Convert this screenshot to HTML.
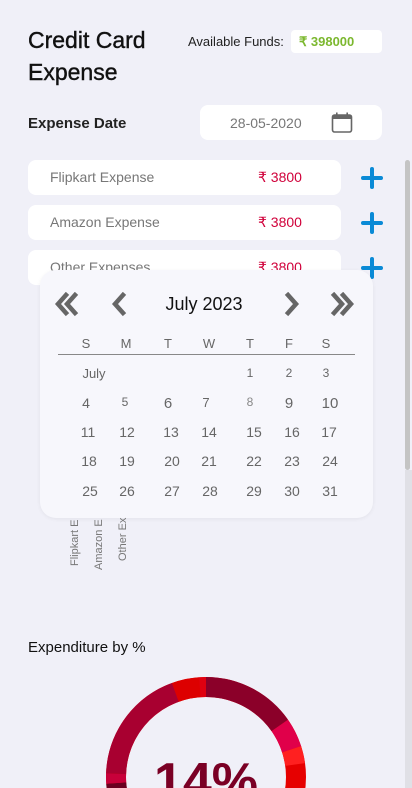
<!DOCTYPE html>
<html style="overflow:hidden;height:788px"><head><meta charset="utf-8"><style>
*{margin:0;padding:0;box-sizing:border-box}
body{width:412px;height:788px;overflow:hidden;background:#f0f0f8;font-family:"Liberation Sans",sans-serif;position:relative;color:#111}
.a{position:absolute}
.box{position:absolute;background:#fff;border-radius:8px}
.lbl{position:absolute;left:22px;top:9px;font-size:14px;color:#777}
.amt{position:absolute;left:230px;top:9px;font-size:14px;color:#d0003a}
.plus{position:absolute;width:22px;height:22px}
.plus:before{content:"";position:absolute;left:0;top:9px;width:22px;height:4px;background:#0a8ad6;border-radius:2px}
.plus:after{content:"";position:absolute;left:9px;top:0;width:4px;height:22px;background:#0a8ad6;border-radius:2px}
.cal{position:absolute;left:40px;top:270px;width:333px;height:248px;background:#f7f7fc;border-radius:16px;box-shadow:0 1px 4px rgba(0,0,0,.06)}
.d{position:absolute;font-size:14px;color:#666;transform:translateX(-50%)}
.v{position:absolute;font-size:11px;color:#777;transform:rotate(-90deg);transform-origin:left top;white-space:nowrap}
</style></head><body>
<div class="a" style="left:28px;top:24px;font-size:23px;line-height:32px;color:#111;-webkit-text-stroke:0.4px #111">Credit Card<br>Expense</div>
<div class="a" style="left:188px;top:34px;font-size:13px;color:#222">Available Funds:</div>
<div class="box" style="left:291px;top:30px;width:91px;height:23px;border-radius:4px"><span class="a" style="left:8px;top:4px;font-size:13px;font-weight:bold;color:#7cb82f">₹ 398000</span></div>
<div class="a" style="left:28px;top:115px;font-size:15px;font-weight:bold;color:#222">Expense Date</div>
<div class="box" style="left:200px;top:105px;width:182px;height:35px"><span class="a" style="left:30px;top:10px;font-size:14px;color:#777">28-05-2020</span>
<svg class="a" style="left:131px;top:7px" width="22" height="22" viewBox="0 0 22 22"><rect x="1.5" y="3" width="19" height="17" rx="2" fill="none" stroke="#666" stroke-width="1.6"/><rect x="1.5" y="3" width="19" height="4" fill="#666"/><rect x="5" y="0.5" width="1.6" height="4" fill="#666"/><rect x="15.4" y="0.5" width="1.6" height="4" fill="#666"/></svg></div>
<div class="box" style="left:28px;top:160px;width:313px;height:35px"><span class="lbl">Flipkart Expense</span><span class="amt">₹ 3800</span></div>
<div class="box" style="left:28px;top:205px;width:313px;height:35px"><span class="lbl">Amazon Expense</span><span class="amt">₹ 3800</span></div>
<div class="box" style="left:28px;top:250px;width:313px;height:35px"><span class="lbl">Other Expenses</span><span class="amt">₹ 3800</span></div>
<div class="plus" style="left:361px;top:167px"></div>
<div class="plus" style="left:361px;top:212px"></div>
<div class="plus" style="left:361px;top:257px"></div>
<div class="a" style="left:405px;top:160px;width:5px;height:310px;background:#c4c4c4;border-radius:3px"></div>
<div class="a" style="left:405px;top:470px;width:7px;height:318px;background:#e0e0e6"></div>
<div class="cal">
<svg class="a" style="left:14px;top:22px" width="300" height="26" viewBox="0 0 300 26">
<g fill="none" stroke="#666" stroke-width="4.5" stroke-linecap="square"><path d="M12 3 L4 12 L12 21 M21 3 L13 12 L21 21"/><path d="M69 3 L61 12 L69 21"/><path d="M234 3 L242 12 L234 21"/><path d="M280 3 L288 12 L280 21 M289 3 L297 12 L289 21"/></g></svg>
<div class="a" style="left:0;width:328px;text-align:center;top:24px;font-size:18px;color:#111">July 2023</div>
<div class="a" style="left:18px;top:84px;width:297px;height:1px;background:#888"></div>
<div style="position:absolute;left:0;top:66px;width:100%">
<span class="d" style="left:46px;font-size:13px">S</span><span class="d" style="left:86px;font-size:13px">M</span><span class="d" style="left:128px;font-size:13px">T</span><span class="d" style="left:169px;font-size:13px">W</span><span class="d" style="left:210px;font-size:13px">T</span><span class="d" style="left:249px;font-size:13px">F</span><span class="d" style="left:286px;font-size:13px">S</span></div>
<div style="position:absolute;left:0;top:96px;width:100%;font-size:13px">
<span class="d" style="left:54px;font-size:13px">July</span><span class="d" style="left:210px;font-size:12px">1</span><span class="d" style="left:249px;font-size:12px">2</span><span class="d" style="left:286px;font-size:12px">3</span></div>
<div style="position:absolute;left:0;top:125px;width:100%">
<span class="d" style="left:46px">4</span><span class="d" style="left:85px;font-size:12px">5</span><span class="d" style="left:128px;font-size:15px">6</span><span class="d" style="left:166px;font-size:13px">7</span><span class="d" style="left:210px;font-size:12px;color:#888">8</span><span class="d" style="left:249px;font-size:15px">9</span><span class="d" style="left:290px;font-size:15px">10</span></div>
<div style="position:absolute;left:0;top:154px;width:100%">
<span class="d" style="left:48px">11</span><span class="d" style="left:87px">12</span><span class="d" style="left:131px">13</span><span class="d" style="left:169px">14</span><span class="d" style="left:214px">15</span><span class="d" style="left:252px">16</span><span class="d" style="left:289px">17</span></div>
<div style="position:absolute;left:0;top:183px;width:100%">
<span class="d" style="left:49px">18</span><span class="d" style="left:87px">19</span><span class="d" style="left:132px">20</span><span class="d" style="left:169px">21</span><span class="d" style="left:214px">22</span><span class="d" style="left:252px">23</span><span class="d" style="left:290px">24</span></div>
<div style="position:absolute;left:0;top:213px;width:100%">
<span class="d" style="left:50px">25</span><span class="d" style="left:87px">26</span><span class="d" style="left:132px">27</span><span class="d" style="left:170px">28</span><span class="d" style="left:214px">29</span><span class="d" style="left:252px">30</span><span class="d" style="left:290px">31</span></div>
</div>
<div class="v" style="left:69px;top:566px">Flipkart E</div>
<div class="v" style="left:93px;top:570px">Amazon E</div>
<div class="v" style="left:117px;top:561px">Other Ex</div>
<div class="a" style="left:28px;top:639px;font-size:15px;color:#111">Expenditure by %</div>
<svg class="a" style="left:96px;top:667px" width="220" height="220" viewBox="0 0 220 220">
<g transform="rotate(-90 110 110)" fill="none" stroke-width="20">
<circle cx="110" cy="110" r="90" stroke="#e60000"/>
<circle cx="110" cy="110" r="90" stroke="#8b0029" stroke-dasharray="86.4 600" stroke-dashoffset="0"/>
<circle cx="110" cy="110" r="90" stroke="#e0004a" stroke-dasharray="26.7 600" stroke-dashoffset="-86.4"/>
<circle cx="110" cy="110" r="90" stroke="#ff2020" stroke-dasharray="15.7 600" stroke-dashoffset="-113.1"/>
<circle cx="110" cy="110" r="90" stroke="#6a0020" stroke-dasharray="40.8 600" stroke-dashoffset="-377"/>
<circle cx="110" cy="110" r="90" stroke="#c8003a" stroke-dasharray="9.4 600" stroke-dashoffset="-417.8"/>
<circle cx="110" cy="110" r="90" stroke="#a80030" stroke-dasharray="106.8 600" stroke-dashoffset="-427.2"/>
<circle cx="110" cy="110" r="90" stroke="#dd0000" stroke-dasharray="25.1 600" stroke-dashoffset="-534"/>
<circle cx="110" cy="110" r="90" stroke="#e00010" stroke-dasharray="6.4 600" stroke-dashoffset="-559.1"/>
</g></svg>
<div class="a" style="left:0;width:412px;text-align:center;top:752px;font-size:52px;font-weight:bold;color:#7a0025">14%</div>
</body></html>
